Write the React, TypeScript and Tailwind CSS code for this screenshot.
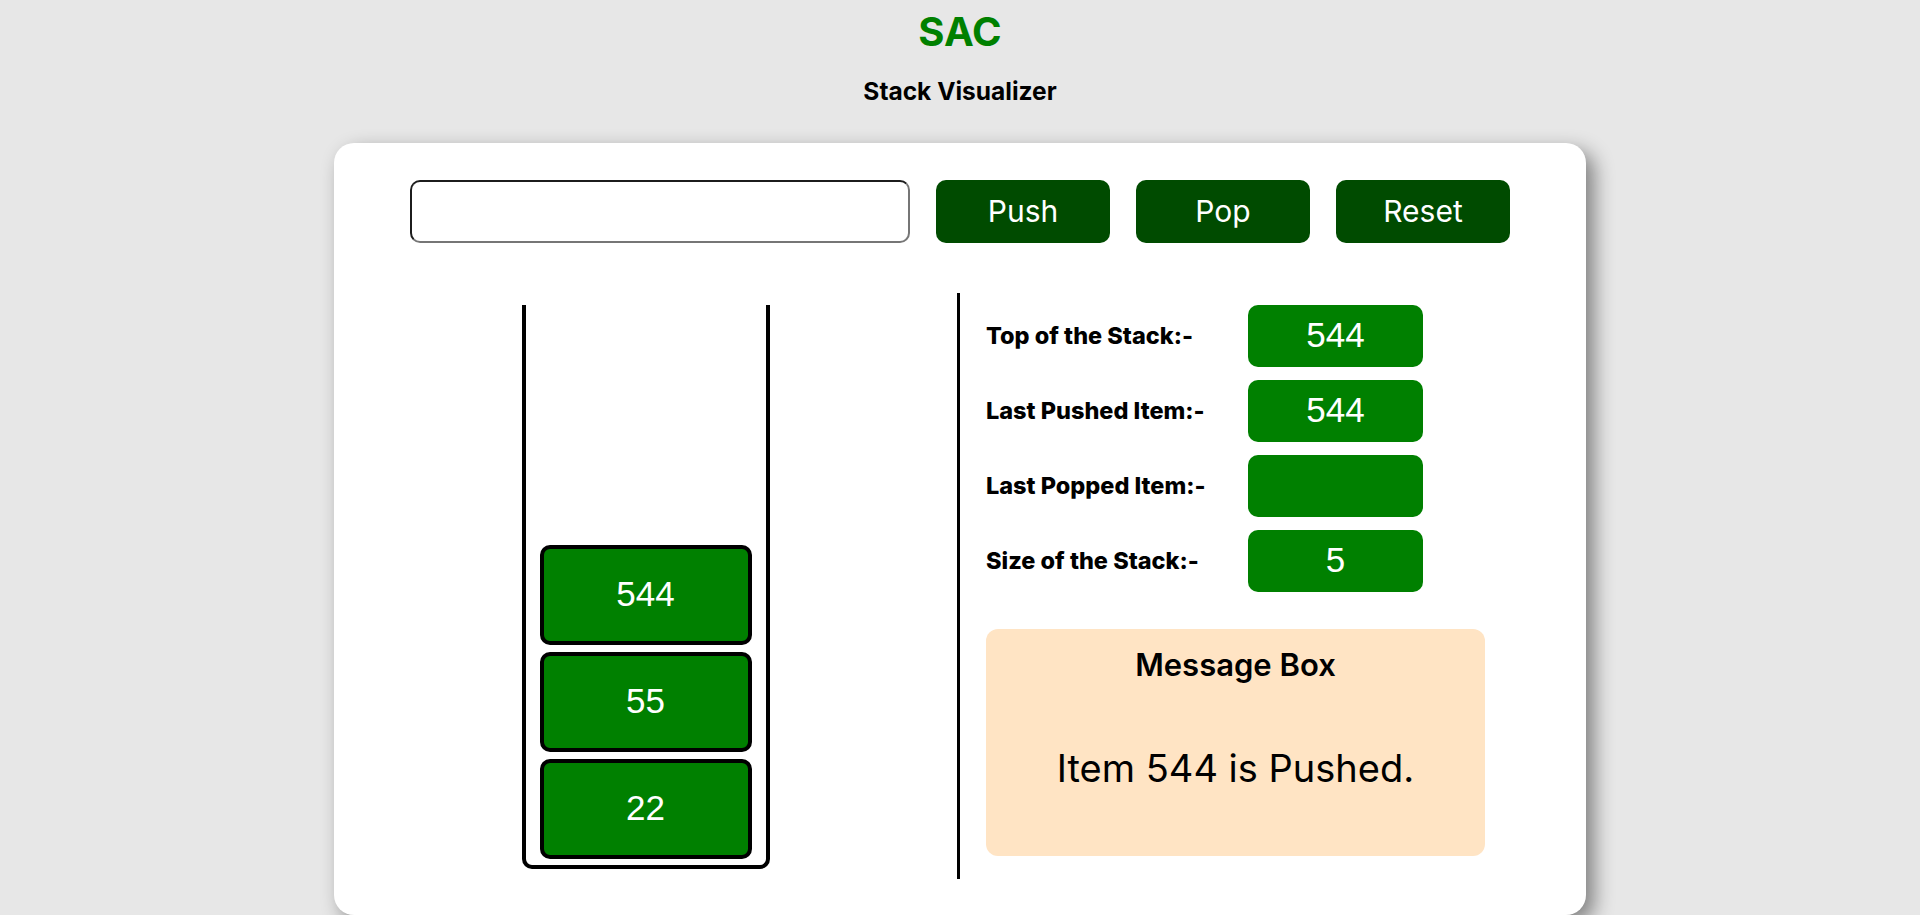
import { useState } from "react";

const sans = "font-['Inter','Noto_Sans',sans-serif]";
const arial = "font-['Liberation_Sans','Arial',sans-serif]";

export default function App() {
  const [value, setValue] = useState("");
  const [stack, setStack] = useState<string[]>(["22", "55", "544"]);
  const [size, setSize] = useState(5);
  const [lastPushed, setLastPushed] = useState("544");
  const [lastPopped, setLastPopped] = useState("");
  const [message, setMessage] = useState("Item 544 is Pushed.");

  const handlePush = () => {
    const v = value.trim();
    if (!v) {
      setMessage("Please enter a value.");
      return;
    }
    setStack((s) => [...s, v]);
    setSize((n) => n + 1);
    setLastPushed(v);
    setMessage(`Item ${v} is Pushed.`);
    setValue("");
  };

  const handlePop = () => {
    if (stack.length === 0) {
      setMessage("Stack is Empty.");
      return;
    }
    const v = stack[stack.length - 1];
    setStack((s) => s.slice(0, -1));
    setSize((n) => Math.max(0, n - 1));
    setLastPopped(v);
    setMessage(`Item ${v} is Popped.`);
  };

  const handleReset = () => {
    setStack([]);
    setSize(0);
    setLastPushed("");
    setLastPopped("");
    setMessage("Stack is Reset.");
  };

  const top = stack.length ? stack[stack.length - 1] : "";

  const rows = [
    { label: "Top of the Stack:-", value: top },
    { label: "Last Pushed Item:-", value: lastPushed },
    { label: "Last Popped Item:-", value: lastPopped },
    { label: "Size of the Stack:-", value: String(size) },
  ];

  return (
    <div className={`min-h-screen bg-[#e7e7e7] flex flex-col items-center ${sans}`}>
      {/* Header */}
      <h1 className="pt-[12px] text-[40px] leading-none font-bold text-[#008000]">SAC</h1>
      <p className="mt-[27px] text-[24.5px] leading-none font-bold text-black">Stack Visualizer</p>

      {/* Card */}
      <div className="mt-[39px] w-[1252px] h-[772px] rounded-[20px] bg-white shadow-[8px_8px_20px_rgba(0,0,0,0.45)] pt-[37px] pb-[36px] flex flex-col">
        {/* Controls */}
        <div className="px-[76px] flex gap-[26px]">
          <input
            value={value}
            onChange={(e) => setValue(e.target.value)}
            className="flex-1 h-[63px] rounded-[10px] border-2 border-t-[#1c1c1c] border-l-[#1c1c1c] border-r-[#767676] border-b-[#767676] px-3 text-[24px] outline-none"
          />
          {[
            { text: "Push", onClick: handlePush },
            { text: "Pop", onClick: handlePop },
            { text: "Reset", onClick: handleReset },
          ].map((b) => (
            <button
              key={b.text}
              onClick={b.onClick}
              className="w-[174px] h-[63px] rounded-[10px] bg-[#004b00] text-white text-[30px] font-normal"
            >
              {b.text}
            </button>
          ))}
        </div>

        {/* Body */}
        <div className="mt-[50px] grid grid-cols-[623px_1fr] flex-1">
          {/* Stack */}
          <div className="flex justify-center items-start pt-[12px]">
            <div className="w-[248px] h-[564px] border-4 border-t-0 border-black rounded-b-[10px] px-[14px] pb-[6px] flex flex-col justify-end gap-[7px]">
              {[...stack].reverse().map((item, i) => (
                <div
                  key={i}
                  className={`h-[100px] shrink-0 rounded-[10px] border-4 border-black bg-[#008000] text-white text-[35px] flex items-center justify-center ${arial}`}
                >
                  {item}
                </div>
              ))}
            </div>
          </div>

          {/* Info */}
          <div className="border-l-[3px] border-black pl-[26px] pt-[12px] pb-[22px] flex flex-col">
            <div className="flex flex-col gap-[13px]">
              {rows.map((r) => (
                <div key={r.label} className="flex items-center">
                  <span className="w-[262px] text-[23.5px] font-extrabold text-black">{r.label}</span>
                  <div
                    className={`w-[175px] h-[62px] rounded-[10px] bg-[#008000] text-white text-[35px] flex items-center justify-center ${arial}`}
                  >
                    {r.value}
                  </div>
                </div>
              ))}
            </div>

            <div className="mt-[37px] w-[499px] h-[227px] rounded-[12px] bg-[#ffe4c4] flex flex-col items-center pt-[14px] pb-[6px]">
              <h2 className="text-[31px] leading-[44px] font-semibold text-black">Message Box</h2>
              <div className="flex-1 flex items-center justify-center text-[38px] font-normal text-black">
                {message}
              </div>
            </div>
          </div>
        </div>
      </div>
    </div>
  );
}
